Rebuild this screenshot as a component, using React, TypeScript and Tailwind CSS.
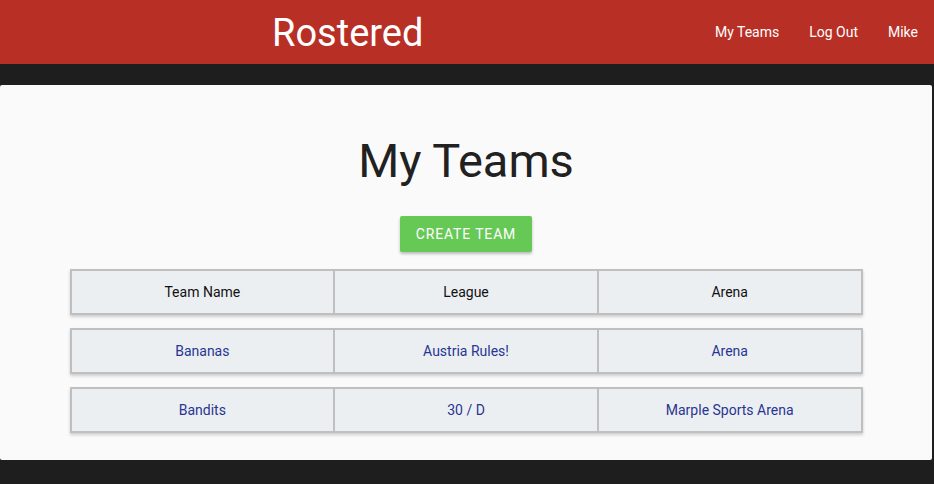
const TEAMS = [
  { name: 'Bananas', league: 'Austria Rules!', arena: 'Arena' },
  { name: 'Bandits', league: '30 / D', arena: 'Marple Sports Arena' },
]

function Row({ cells, header }: { cells: string[]; header?: boolean }) {
  return (
    <div className="flex h-[46px] border-2 border-[#bfbfbf] bg-[#eceff1] shadow-[0_2px_3px_rgba(0,0,0,0.18)]">
      {cells.map((c, i) => (
        <div
          key={i}
          className={`flex-1 flex items-center justify-center text-[14px] ${i > 0 ? 'border-l-2 border-[#bfbfbf]' : ''} ${
            header ? 'text-[#111]' : 'text-[#283593]'
          }`}
        >
          {c}
        </div>
      ))}
    </div>
  )
}

export default function App() {
  return (
    <div className="w-[934px] h-[484px] bg-[#1e1e1e] overflow-hidden" style={{ fontFamily: 'Roboto, "Liberation Sans", sans-serif' }}>
      {/* Header */}
      <div className="h-[64px] bg-[#b82f26] flex items-center pl-[272px] pr-4 text-white">
        <div className="text-[38px] leading-none pt-[2px]">Rostered</div>
        <div className="ml-auto flex items-center gap-[30px] text-[14px]">
          <span>My Teams</span>
          <span>Log Out</span>
          <span>Mike</span>
        </div>
      </div>

      {/* Card */}
      <div className="mt-[21px] mr-[2px] h-[375px] bg-[#fafafa] rounded-[2px] flex flex-col items-center">
        <h1 className="mt-[52px] text-[47px] leading-none text-[#212121]">My Teams</h1>
        <button className="mt-[32px] h-[36px] w-[132px] rounded-[2px] bg-[#66c955] text-white text-[14px] tracking-[0.06em] shadow-[0_2px_3px_rgba(0,0,0,0.25)]">
          CREATE TEAM
        </button>
        <div className="mt-[17px] w-[793px] flex flex-col gap-[13px]">
          <Row header cells={['Team Name', 'League', 'Arena']} />
          {TEAMS.map((t) => (
            <Row key={t.name} cells={[t.name, t.league, t.arena]} />
          ))}
        </div>
      </div>
    </div>
  )
}
